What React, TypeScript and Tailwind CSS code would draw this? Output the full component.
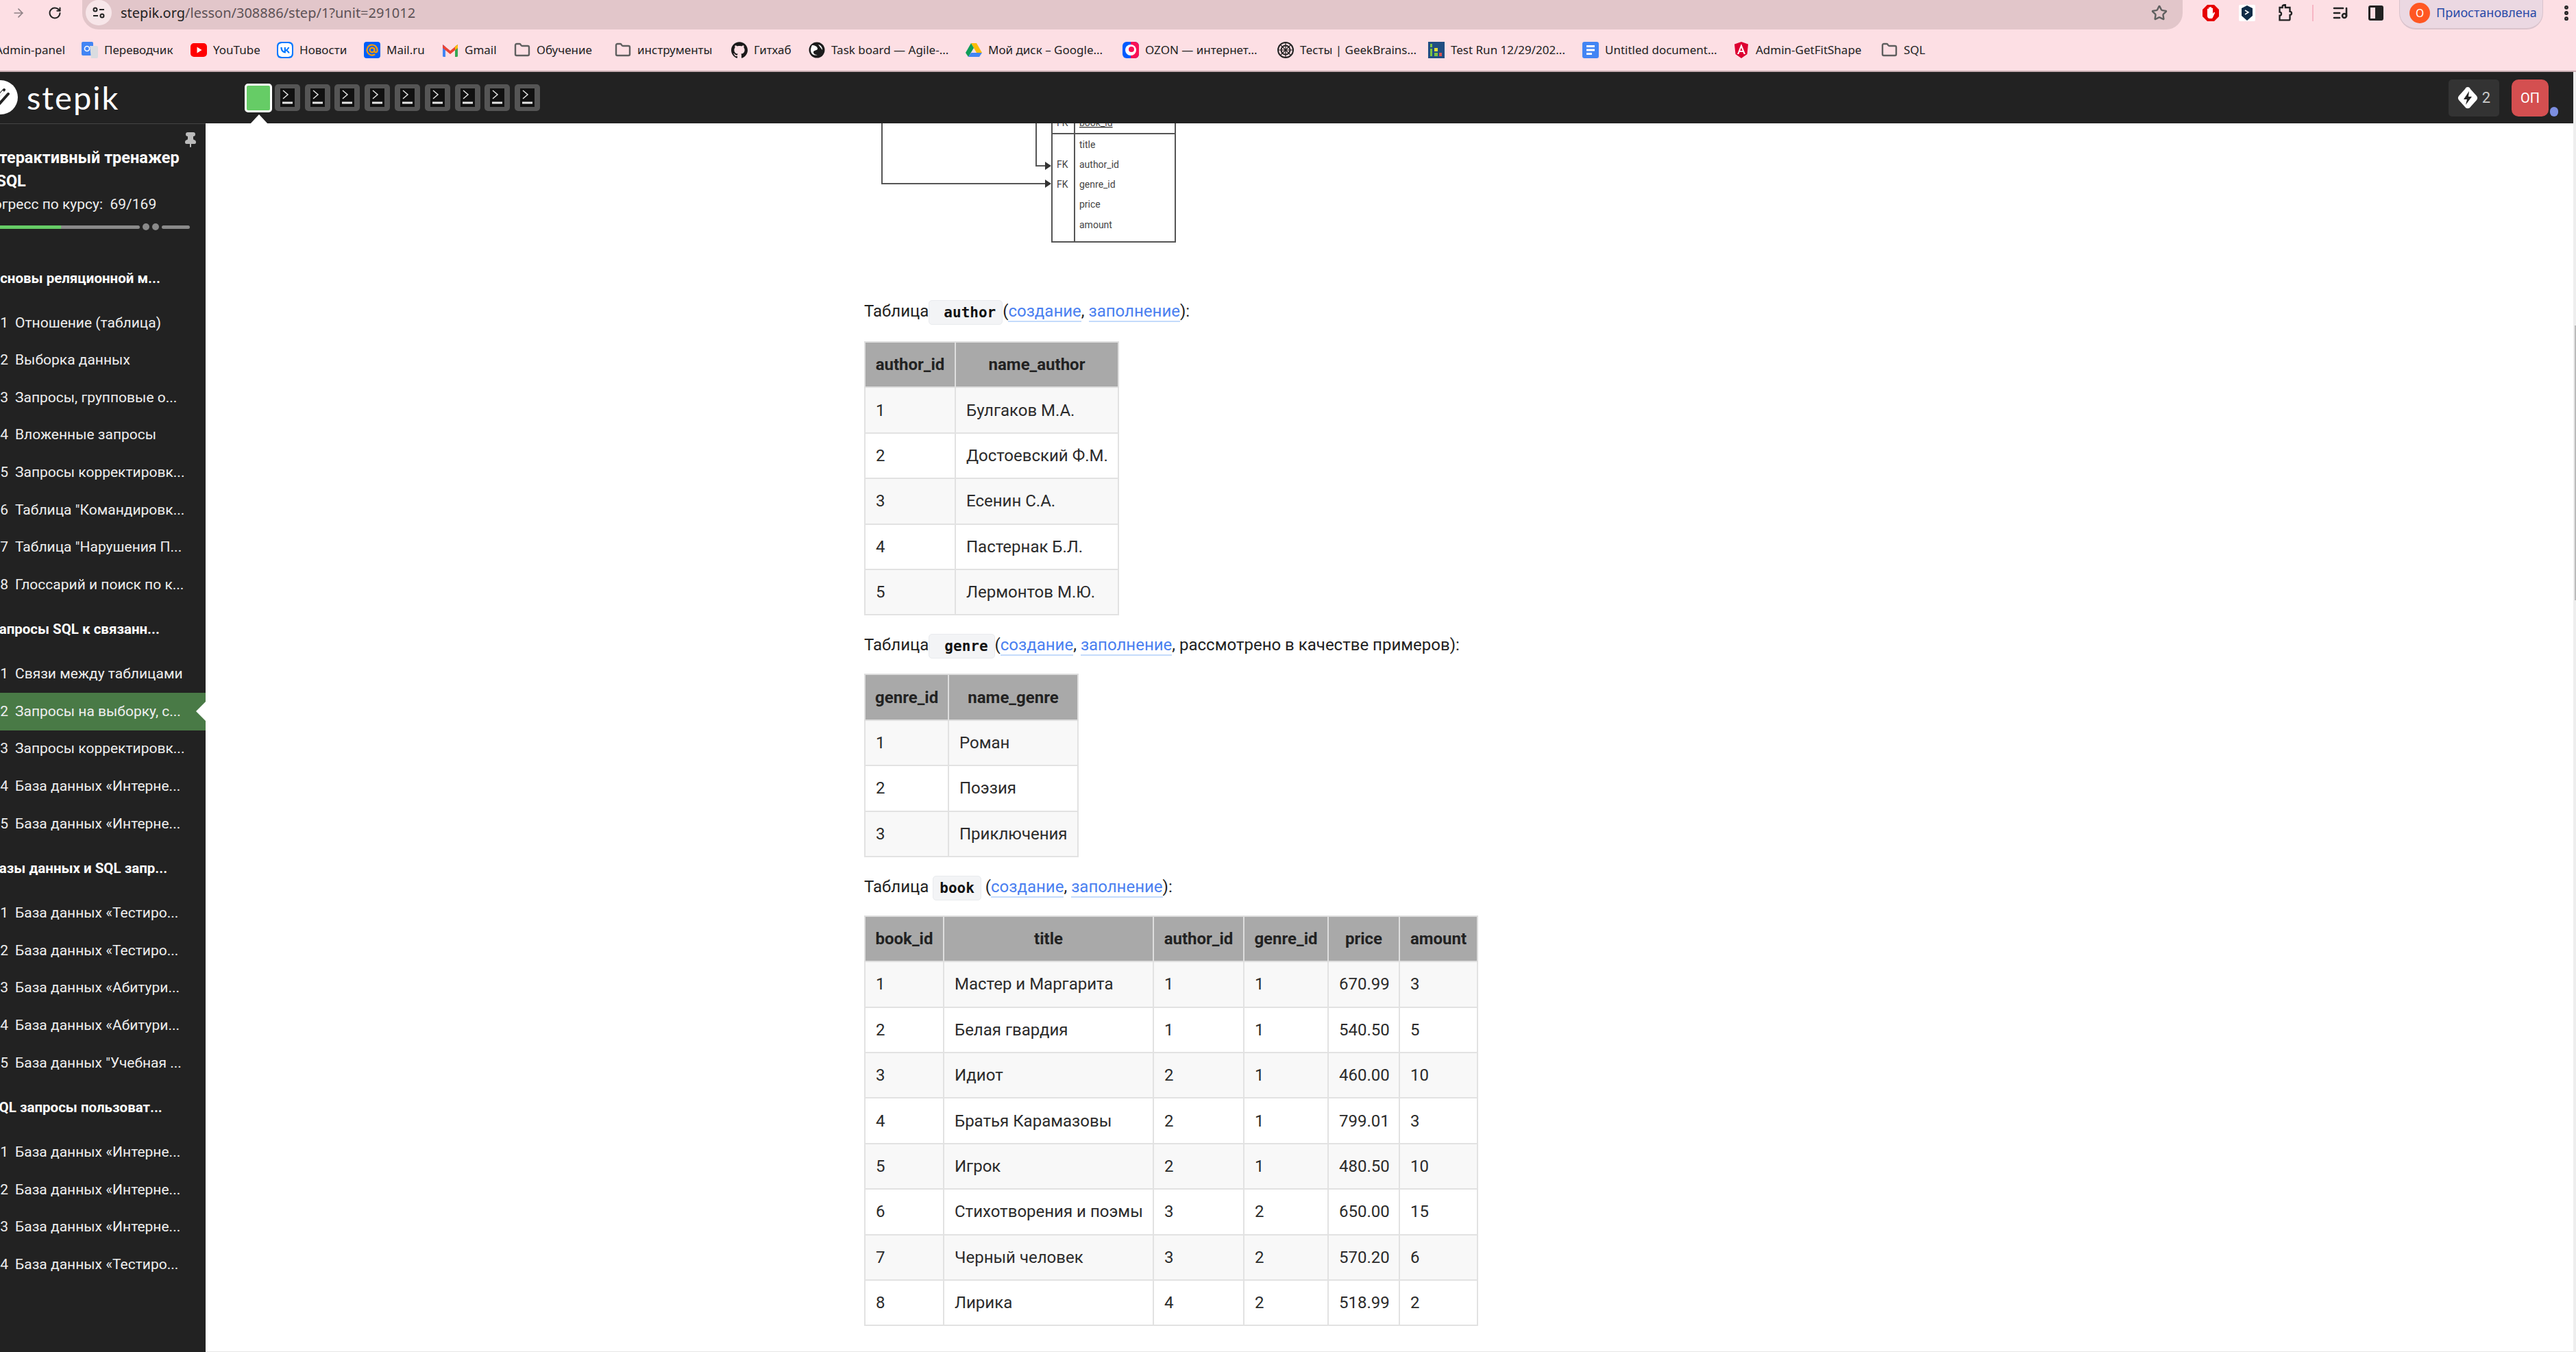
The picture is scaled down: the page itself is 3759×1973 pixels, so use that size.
import { ArrowRight, Folder, ListMusic, MoreVertical, Pin, RotateCw, Star } from "lucide-react";
import { SiGithub, SiVk } from "react-icons/si";

const Translate = () => (
  <svg viewBox="0 0 24 24" className="w-6 h-6">
    <rect x="0" y="0" width="17" height="20" rx="2" fill="#4285f4" />
    <path d="M12 6h10a2 2 0 0 1 2 2v14a2 2 0 0 1-2 2h-8z" fill="#dadce0" />
    <circle cx="8" cy="10" r="3.5" fill="none" stroke="#fff" strokeWidth="1.6" />
  </svg>
);
const YouTube = () => (
  <svg viewBox="0 0 24 24" className="w-6 h-6">
    <rect x="0" y="2" width="24" height="20" rx="5" fill="#ff0000" />
    <path d="M9.5 7.5v9l7-4.5z" fill="#fff" />
  </svg>
);
const Vk = () => (
  <span className="w-6 h-6 rounded-md bg-[#0077ff] flex items-center justify-center">
    <SiVk className="w-5 h-5 text-white" />
  </span>
);
const MailRu = () => (
  <span className="w-6 h-6 rounded bg-[#005ff9] flex items-center justify-center">
    <svg viewBox="0 0 24 24" className="w-5 h-5" fill="none" stroke="#ff9e00" strokeWidth="2.6">
      <circle cx="12" cy="12" r="4" />
      <path d="M16 8v5.5a2.5 2.5 0 0 0 5 0V12a9 9 0 1 0-4 7.5" />
    </svg>
  </span>
);
const Gmail = () => (
  <svg viewBox="0 0 24 24" className="w-6 h-6">
    <path d="M1 4l4 3v15H2.500A1.500 1.500 0 0 1 1 20.500z" fill="#4285f4" />
    <path d="M23 4l-4 3v15h2.500a1.500 1.500 0 0 0 1.500-1.500z" fill="#34a853" />
    <path d="M1 4l11 9 11-9v5l-11 9L1 9z" fill="#ea4335" />
    <path d="M19 7l4-3v5l-4 3z" fill="#fbbc04" />
  </svg>
);
const FolderIcon = () => <Folder className="w-6 h-6 text-[#5f5f5f]" strokeWidth={2.4} />;
const Github = () => <SiGithub className="w-6 h-6 text-[#1a1a1a]" />;
const Task = () => (
  <svg viewBox="0 0 24 24" className="w-6 h-6">
    <circle cx="12" cy="12" r="11.500" fill="#1c1c1c" />
    <path d="M5 5c4 0 8 2 8 5s-6 2-6 5 3 4 6 4c-5 2-10-1-10-7 0-3 1-5 2-7zM14 4c4 1 6 4 6 8-2-3-4-5-6-8z" fill="#fff" />
  </svg>
);
const Drive = () => (
  <svg viewBox="0 0 24 24" className="w-6 h-6">
    <path d="M8 2h8l8 14h-8z" fill="#fbbc04" />
    <path d="M8 2l4 7-8 13-4-6z" fill="#0f9d58" />
    <path d="M8 16h16l-4 6H4z" fill="#4285f4" />
  </svg>
);
const Ozon = () => (
  <svg viewBox="0 0 24 24" className="w-6 h-6">
    <rect x="0" y="0" width="24" height="24" rx="6" fill="#005bff" />
    <path d="M12 0h6a6 6 0 0 1 6 6v12a6 6 0 0 1-6 6h-6z" fill="#f91155" />
    <circle cx="12" cy="12" r="8" fill="#fff" />
    <circle cx="13" cy="11" r="4" fill="#f91155" />
  </svg>
);
const GeekBrains = () => (
  <svg viewBox="0 0 24 24" className="w-6 h-6" fill="none" stroke="#222" strokeWidth="2">
    <circle cx="12" cy="12" r="11" />
    <circle cx="12" cy="12" r="6.500" />
    <path d="M12 1v22M1 12h22M5 5l14 14M19 5L5 19" strokeWidth="1.200" />
  </svg>
);
const TestRun = () => (
  <svg viewBox="0 0 24 24" className="w-6 h-6">
    <rect width="24" height="24" fill="#1f4e82" />
    <rect x="3" y="3" width="3" height="5" fill="#7ac143" />
    <rect x="3" y="10" width="3" height="11" fill="#7ac143" />
    <rect x="9" y="9" width="5" height="5" fill="#e6e03a" />
    <rect x="9" y="16" width="5" height="5" fill="#7ac143" />
    <rect x="16" y="16" width="4" height="5" fill="#d9534f" />
  </svg>
);
const Docs = () => (
  <svg viewBox="0 0 24 24" className="w-6 h-6">
    <rect width="24" height="24" rx="3" fill="#4285f4" />
    <rect x="6" y="5" width="12" height="3" fill="#fff" />
    <rect x="6" y="10.500" width="12" height="3" fill="#fff" />
    <rect x="6" y="16" width="8" height="3" fill="#fff" />
  </svg>
);
const Angular = () => (
  <svg viewBox="0 0 24 24" className="w-6 h-6">
    <path d="M12 0L2 3.500 3.500 18 12 24l8.500-6L22 3.500z" fill="#dd0031" />
    <path d="M12 3L6 18h2.300l1.200-3h5l1.200 3H18zm-1.700 10L12 8.500l1.700 4.500z" fill="#fff" />
  </svg>
);

const bookmarks = [
  { w: "w-[159px]", icon: <Translate />, label: "Переводчик" },
  { w: "w-[126px]", icon: <YouTube />, label: "YouTube" },
  { w: "w-[127px]", icon: <Vk />, label: "Новости" },
  { w: "w-[114px]", icon: <MailRu />, label: "Mail.ru" },
  { w: "w-[105px]", icon: <Gmail />, label: "Gmail" },
  { w: "w-[147px]", icon: <FolderIcon />, label: "Обучение" },
  { w: "w-[170px]", icon: <FolderIcon />, label: "инструменты" },
  { w: "w-[113px]", icon: <Github />, label: "Гитхаб" },
  { w: "w-[229px]", icon: <Task />, label: "Task board — Agile-..." },
  { w: "w-[229px]", icon: <Drive />, label: "Мой диск – Google..." },
  { w: "w-[226px]", icon: <Ozon />, label: "OZON — интернет..." },
  { w: "w-[220px]", icon: <GeekBrains />, label: "Тесты | GeekBrains..." },
  { w: "w-[225px]", icon: <TestRun />, label: "Test Run 12/29/202..." },
  { w: "w-[220px]", icon: <Docs />, label: "Untitled document..." },
  { w: "w-[216px]", icon: <Angular />, label: "Admin-GetFitShape" },
  { w: "w-[80px]", icon: <FolderIcon />, label: "SQL" },
];

const sections = [
  {
    title: "Основы реляционной м...",
    items: [
      ["1.1", "Отношение (таблица)"],
      ["1.2", "Выборка данных"],
      ["1.3", "Запросы, групповые о..."],
      ["1.4", "Вложенные запросы"],
      ["1.5", "Запросы корректировк..."],
      ["1.6", 'Таблица "Командировк...'],
      ["1.7", 'Таблица "Нарушения П...'],
      ["1.8", "Глоссарий и поиск по к..."],
    ],
  },
  {
    title: "Запросы SQL к связанн...",
    items: [
      ["2.1", "Связи между таблицами"],
      ["2.2", "Запросы на выборку, с..."],
      ["2.3", "Запросы корректировк..."],
      ["2.4", "База данных «Интерне..."],
      ["2.5", "База данных «Интерне..."],
    ],
  },
  {
    title: "Базы данных и SQL запр...",
    items: [
      ["3.1", "База данных «Тестиро..."],
      ["3.2", "База данных «Тестиро..."],
      ["3.3", "База данных «Абитури..."],
      ["3.4", "База данных «Абитури..."],
      ["3.5", 'База данных "Учебная ...'],
    ],
  },
  {
    title: "SQL запросы пользоват...",
    items: [
      ["4.1", "База данных «Интерне..."],
      ["4.2", "База данных «Интерне..."],
      ["4.3", "База данных «Интерне..."],
      ["4.4", "База данных «Тестиро..."],
    ],
  },
];

const StepTile = () => (
  <div className="w-[37px] h-[39px] rounded-[5px] bg-[#555] flex items-center justify-center">
    <div className="w-[21px] h-[27px] bg-[#111] flex flex-col items-center justify-end pb-[3px]">
      <svg viewBox="0 0 21 24" className="w-[21px] h-[24px]" fill="none" stroke="#e5e5e5">
        <path d="M4 3l7 6-7 6" strokeWidth="1.500" />
        <path d="M3 21h15" strokeWidth="3" />
      </svg>
    </div>
  </div>
);

const Link = ({ children }: { children: string }) => (
  <a className="text-[#4a7ff0] border-b-2 border-[#c4dbfb]">{children}</a>
);

const Code = ({ children, className }: { children: string; className: string }) => (
  <code
    className={
      "inline-block h-[36px] leading-[34px] bg-[#f3f4f6] border border-[#e9ebee] rounded-[5px] text-[21px] font-bold text-[#111] font-['DejaVu_Sans_Mono',monospace] align-middle " +
      className
    }
  >
    {children}
  </code>
);

const DataTable = ({
  cols,
  head,
  rows,
  width,
}: {
  cols: string[];
  head: string[];
  rows: string[][];
  width: string;
}) => (
  <table className={"table-fixed border-collapse text-[24px] mb-[25px] " + width}>
    <colgroup>
      {cols.map((c, i) => (
        <col key={i} className={c} />
      ))}
    </colgroup>
    <thead>
      <tr className="h-[66.4px] bg-[#a9a9a9]">
        {head.map((h) => (
          <th key={h} className="border-2 border-[#dedede] px-[14px] font-bold text-center text-[#222] whitespace-nowrap">
            {h}
          </th>
        ))}
      </tr>
    </thead>
    <tbody>
      {rows.map((r, i) => (
        <tr key={i} className={i % 2 === 0 ? "h-[66.4px] bg-[#f8f8f8]" : "h-[66.4px] bg-white"}>
          {r.map((c, j) => (
            <td key={j} className="border-2 border-[#e2e2e2] px-[15px] text-[#2b2b2b] whitespace-nowrap">
              {c}
            </td>
          ))}
        </tr>
      ))}
    </tbody>
  </table>
);

const Diagram = () => (
  <svg viewBox="0 0 460 175" className="w-[460px] h-[175px] block" fill="none">
    <g stroke="#555" strokeWidth="2">
      <path d="M26 0v88h238" />
      <path d="M251 0v62h14" />
      <rect x="274" y="-10" width="180" height="183" />
      <path d="M307 -10v183" />
      <path d="M274 15h180" />
    </g>
    <path d="M264 82l9 6-9 6zM264 56l9 6-9 6z" fill="#333" />
    <g fill="#444" fontSize="14" fontFamily="Roboto, sans-serif">
      <text x="281" y="4">FK</text>
      <text x="314" y="4" textDecoration="underline">book_id</text>
      <text x="314" y="36">title</text>
      <text x="281" y="65">FK</text>
      <text x="314" y="65">author_id</text>
      <text x="281" y="94">FK</text>
      <text x="314" y="94">genre_id</text>
      <text x="314" y="123">price</text>
      <text x="314" y="153">amount</text>
    </g>
  </svg>
);

export default function App() {
  return (
    <div className="w-[3759px] h-[1973px] overflow-hidden flex flex-col bg-white font-[Roboto,sans-serif]">
      {/* browser toolbar */}
      <div className="h-[43px] pb-[6px] flex items-center bg-[#fddfe4] font-['Noto_Sans',sans-serif]">
        <ArrowRight className="ml-[17px] w-5 h-5 text-[#8d8084]" />
        <RotateCw className="ml-[33px] w-5 h-5 text-[#222]" strokeWidth={2.4} />
        <div className="ml-[30px] self-start w-[3066px] h-[43px] pb-[6px] bg-[#e2c6ca] rounded-b-[24px] flex items-center">
          <div className="ml-[5px] w-[38px] h-[37px] rounded-full bg-[#f7e6e9] flex items-center justify-center">
            <svg viewBox="0 0 20 20" className="w-5 h-5" fill="none" stroke="#222" strokeWidth="2">
              <circle cx="5" cy="5" r="2.500" />
              <path d="M11 5h7M2 14h7" />
              <circle cx="15" cy="14" r="2.500" />
            </svg>
          </div>
          <span className="ml-[13px] text-[20px] text-[#5d5256]">
            <span className="text-[#222]">stepik.org</span>/lesson/308886/step/1?unit=291012
          </span>
          <Star className="ml-auto mr-[22px] w-6 h-6 text-[#5f5f5f]" strokeWidth={2.4} />
        </div>
        <svg viewBox="0 0 24 24" className="ml-[29px] w-6 h-6">
          <path d="M7 0h10l7 7v10l-7 7H7l-7-7V7z" fill="#e60000" />
          <path d="M7 11V6.500a1 1 0 0 1 2 0V11V4.500a1 1 0 0 1 2 0V11V4a1 1 0 0 1 2 0v7V5.500a1 1 0 0 1 2 0V13l1.500-2a1 1 0 0 1 1.500 1l-3 6.500a2 2 0 0 1-2 1.500h-2.500C8 20 7 18 7 16z" fill="#fff" />
        </svg>
        <div className="ml-[29px] w-6 h-6 bg-white rounded-[2px] flex items-center justify-center">
          <svg viewBox="0 0 16 22" className="w-[16px] h-[22px]">
            <path d="M8 0l8 4v11l-8 7-8-7V4z" fill="#0f2b46" />
            <path d="M5 7l5 3-5 3" stroke="#fff" strokeWidth="1.500" fill="none" />
          </svg>
        </div>
        <svg viewBox="0 0 24 30" className="ml-[31px] w-6 h-[25px]" fill="none" stroke="#222" strokeWidth="2.800">
          <path d="M3 6h5V3.500a1.500 1.500 0 0 1 3 0 V1h2v5h8v7a3 3 0 0 1 0 6v7a2 2 0 0 1-2 2H3v-8a3 3 0 0 0 0-6z" />
        </svg>
        <div className="ml-[28px] w-[2px] h-[24px] bg-[#f7b6c4]" />
        <ListMusic className="ml-[27px] w-6 h-6 text-[#222]" strokeWidth={2.6} />
        <div className="ml-[29px] w-[22px] h-[22px] rounded-[3px] border-[3px] border-[#222] flex justify-end">
          <div className="w-[9px] bg-[#222]" />
        </div>
        <div className="ml-[23px] self-start w-[210px] h-[43px] pb-[4px] rounded-b-[24px] bg-[#ebd8e2] border-b-2 border-x border-[#d9c3cc] flex items-center">
          <span className="ml-[14px] w-[30px] h-[30px] rounded-full bg-[#ff5722] text-white text-[16px] flex items-center justify-center">
            О
          </span>
          <span className="ml-[9px] text-[18px] text-[#2a4aa8] whitespace-nowrap">Приостановлена</span>
        </div>
        <MoreVertical className="ml-[20px] w-7 h-7 text-[#222]" strokeWidth={3} />
      </div>

      {/* bookmarks bar */}
      <div className="h-[62px] flex items-center bg-[#fddfe4] border-b-2 border-[#c9aeb3] text-[17px] text-[#222] font-['Noto_Sans',sans-serif] overflow-hidden">
        <div className="w-[119px] shrink-0 overflow-hidden">
          <span className="block -ml-[7px] whitespace-nowrap">Admin-panel</span>
        </div>
        {bookmarks.map((b) => (
          <div key={b.label} className={"flex items-center gap-[9px] shrink-0 " + b.w}>
            {b.icon}
            <span className="whitespace-nowrap">{b.label}</span>
          </div>
        ))}
      </div>

      <div className="flex-1 flex min-h-0">
        <div className="flex-1 flex flex-col min-w-0">
          {/* stepik header */}
          <header className="h-[75px] shrink-0 flex items-center bg-[#222] relative">
            <svg viewBox="0 0 50 50" className="absolute -left-[24px] top-[12px] w-[50px] h-[50px]" fill="none">
              <circle cx="25" cy="25" r="25" fill="#fff" />
              <path d="M14 32L30 14M20 38L36 20" stroke="#222" strokeWidth="4" strokeLinecap="round" />
              <path d="M20 26l9 -10" stroke="#fff" strokeWidth="3" />
            </svg>
            <span className="ml-[39px] w-[318px] text-[47px] leading-none tracking-[2px] font-[Lato,sans-serif] font-normal text-white">stepik</span>
            <div className="flex items-center gap-[6.8px] relative">
              <div className="w-[40px] h-[42px] rounded-[5px] bg-[#66cc66] border-[3px] border-white -mr-[3px]" />
              {Array.from({ length: 9 }).map((_, i) => (
                <StepTile key={i} />
              ))}
              <div className="absolute left-[7px] -bottom-[18px] w-0 h-0 border-x-[14px] border-x-transparent border-b-[15px] border-b-white" />
            </div>
            <div className="ml-auto mr-[36px] flex items-center relative">
              <div className="w-[74px] h-[54px] rounded-[5px] bg-[#333] flex items-center justify-center gap-[6px]">
                <svg viewBox="0 0 30 32" className="w-[30px] h-[32px]">
                  <path d="M15 0c2 0 3 1 4 3l9 10c1.500 2 1.500 4 0 6l-9 10c-2 3-6 3-8 0L2 19c-1.500-2-1.500-4 0-6l9-10c1-2 2-3 4-3z" fill="#fff" />
                  <path d="M17 6l-8 12h5l-2 8 9-12h-5z" fill="#222" />
                </svg>
                <span className="text-[22px] text-[#ccc]">2</span>
              </div>
              <div className="ml-[18px] w-[54px] h-[54px] rounded-[10px] bg-[#d44f50] text-white text-[20px] flex items-center justify-center">
                ОП
              </div>
              <div className="absolute -right-[14px] bottom-0 w-[12px] h-[14px] rounded-full bg-[#7c8ee0]" />
            </div>
          </header>

          <div className="flex-1 flex min-h-0">
            {/* sidebar */}
            <aside className="w-[300px] shrink-0 bg-[#222] border-t border-[#444] text-[#eee] relative overflow-hidden">
              <Pin className="absolute left-[266px] top-[11px] w-6 h-6 text-[#bbb] fill-[#bbb]" />
              <div className="pt-[32px] -ml-[31px] w-[340px] text-[23.5px] leading-[34px] font-bold text-white">
                Интерактивный тренажер
                <span className="block -ml-[7px]">по SQL</span>
              </div>
              <div className="-ml-[36px] h-[34px] text-[21px] leading-[34px] whitespace-pre">Прогресс по курсу:  69/169</div>
              <div className="mt-[11px] flex items-center gap-[4px]">
                <div className="w-[204px] h-[5px] rounded-r-full bg-[#8a8a8a] overflow-hidden">
                  <div className="w-[89px] h-[5px] bg-[#66cc66]" />
                </div>
                <div className="w-[10px] h-[10px] rounded-full bg-[#8a8a8a]" />
                <div className="w-[10px] h-[10px] rounded-full bg-[#8a8a8a]" />
                <div className="w-[41px] h-[5px] rounded-full bg-[#8a8a8a]" />
              </div>
              <div className="mt-[32px]">
                {sections.map((s) => (
                  <section key={s.title}>
                    <div className="h-[76px] -ml-[14px] flex items-center text-[20.5px] font-bold text-white whitespace-nowrap">{s.title}</div>
                    {s.items.map(([n, t]) => (
                      <div
                        key={n + t}
                        className={
                          n === "2.2"
                            ? "h-[54.6px] flex items-center bg-[#497a46] relative text-[21px] whitespace-nowrap"
                            : "h-[54.6px] flex items-center text-[21px] whitespace-nowrap"
                        }
                      >
                        <span className="-ml-[17px] w-[39px] shrink-0">{n}</span>
                        <span>{t}</span>
                        {n === "2.2" && (
                          <div className="absolute right-0 top-[13px] w-0 h-0 border-y-[14px] border-y-transparent border-r-[14px] border-r-white" />
                        )}
                      </div>
                    ))}
                  </section>
                ))}
              </div>
            </aside>

            {/* step content */}
            <main className="flex-1 flex flex-col min-w-0 text-[24px] text-[#222]">
              <div className="pl-[961px]">
                <Diagram />
                <p className="mt-[81px] mb-[26px] h-[36px] leading-[36px] whitespace-nowrap">
                  Таблица<Code className="pl-[21px] pr-[9px]">author</Code>(<Link>создание</Link>, <Link>заполнение</Link>):
                </p>
                <DataTable
                  width="w-[370px]"
                  cols={["w-[132px]", "w-[238px]"]}
                  head={["author_id", "name_author"]}
                  rows={[
                    ["1", "Булгаков М.А."],
                    ["2", "Достоевский Ф.М."],
                    ["3", "Есенин С.А."],
                    ["4", "Пастернак Б.Л."],
                    ["5", "Лермонтов М.Ю."],
                  ]}
                />
                <p className="mb-[24px] h-[36px] leading-[36px] whitespace-nowrap">
                  Таблица<Code className="pl-[22px] pr-[9px]">genre</Code>(<Link>создание</Link>, <Link>заполнение</Link>, рассмотрено в качестве примеров):
                </p>
                <DataTable
                  width="w-[311px]"
                  cols={["w-[122px]", "w-[189px]"]}
                  head={["genre_id", "name_genre"]}
                  rows={[
                    ["1", "Роман"],
                    ["2", "Поэзия"],
                    ["3", "Приключения"],
                  ]}
                />
                <p className="mb-[24px] h-[36px] leading-[36px] whitespace-nowrap">
                  Таблица <Code className="px-[9px]">book</Code> (<Link>создание</Link>, <Link>заполнение</Link>):
                </p>
                <DataTable
                  width="w-[894px]"
                  cols={["w-[115px]", "w-[306px]", "w-[132px]", "w-[123px]", "w-[104px]", "w-[114px]"]}
                  head={["book_id", "title", "author_id", "genre_id", "price", "amount"]}
                  rows={[
                    ["1", "Мастер и Маргарита", "1", "1", "670.99", "3"],
                    ["2", "Белая гвардия", "1", "1", "540.50", "5"],
                    ["3", "Идиот", "2", "1", "460.00", "10"],
                    ["4", "Братья Карамазовы", "2", "1", "799.01", "3"],
                    ["5", "Игрок", "2", "1", "480.50", "10"],
                    ["6", "Стихотворения и поэмы", "3", "2", "650.00", "15"],
                    ["7", "Черный человек", "3", "2", "570.20", "6"],
                    ["8", "Лирика", "4", "2", "518.99", "2"],
                  ]}
                />
              </div>
              <div className="mt-[12px] border-t-2 border-[#e6e6e6]" />
            </main>
          </div>
        </div>

        {/* page scrollbar */}
        <div className="w-[4px] shrink-0 bg-[#eeeeee] flex flex-col items-end">
          <div className="mt-[370px] w-[2px] h-[401px] bg-[#bbbbbb]" />
        </div>
      </div>
    </div>
  );
}
